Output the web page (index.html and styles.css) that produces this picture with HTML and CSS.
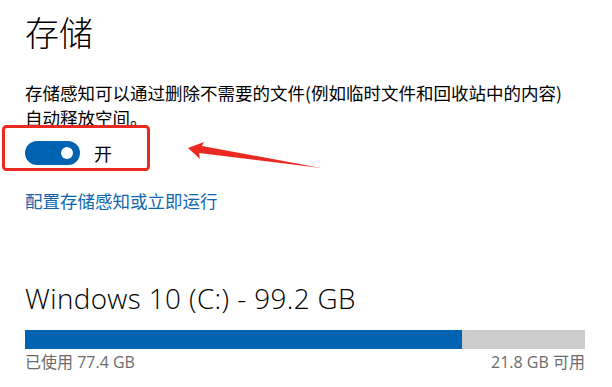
FILE: index.html
```html
<!DOCTYPE html>
<html lang="zh-CN">
<head>
  <meta charset="UTF-8" />
  <title>存储</title>
  <link rel="stylesheet" href="styles.css">
</head>
<body>

  <h1 class="title">存储</h1>

  <p class="desc">存储感知可以通过删除不需要的文件(例如临时文件和回收站中的内容)自动释放空间。</p>

  <div class="toggle-row">
    <div class="toggle"><span class="knob"></span></div>
    <span class="toggle-label">开</span>
  </div>

  <a class="link" href="#">配置存储感知或立即运行</a>

  <h2 class="drive">Windows 10 (C:) - 99.2 GB</h2>

  <div class="bar">
    <div class="bar-used" style="width: 78%"></div>
  </div>
  <div class="bar-labels">
    <span>已使用 77.4 GB</span>
    <span>21.8 GB 可用</span>
  </div>

  <!-- 标注：红框和箭头 -->
  <svg class="note" width="612" height="387" viewBox="0 0 612 387">
    <rect x="3.5" y="126.5" width="145" height="43" rx="3" fill="none" stroke="#ea2a20" stroke-width="3" />
    <polygon points="188,148 204,142 202,146 321,168 199,153 200,159" fill="#ea2a20" />
  </svg>

</body>
</html>
```

FILE: styles.css
```css
body {
  margin: 0;
  padding: 0 27px 0 25px;
  font-family: "Noto Sans CJK SC", "Noto Sans", sans-serif;
  color: #000;
  background: #fff;
  position: relative;
}

.title {
  margin: 10px 0 0;
  font-size: 34px;
  line-height: 44px;
  font-weight: 300;
}

.desc {
  margin: 26px 0 0;
  max-width: 545px;
  font-size: 17.5px;
  line-height: 25px;
}

.toggle-row {
  display: flex;
  align-items: center;
  gap: 14px;
  margin-top: 11px;
  height: 24px;
}

.toggle {
  width: 55px;
  height: 24px;
  border-radius: 12px;
  background: #0063b1;
  display: flex;
  align-items: center;
  justify-content: flex-end;
  padding-right: 7px;
  box-sizing: border-box;
}

.knob {
  width: 12px;
  height: 12px;
  border-radius: 50%;
  background: #fff;
}

.toggle-label {
  font-size: 18px;
}

.link {
  display: block;
  margin-top: 23px;
  font-size: 17.5px;
  line-height: 25px;
  color: #0f66b0;
  text-decoration: none;
}

.drive {
  margin: 67px 0 0;
  font-family: "Open Sans", "Noto Sans CJK SC", sans-serif;
  font-size: 27.8px;
  line-height: 36px;
  font-weight: 300;
  letter-spacing: 0.4px;
}

.bar {
  margin-top: 14px;
  height: 19px;
  background: #cccccc;
}

.bar-used {
  height: 100%;
  background: #0063b1;
}

.bar-labels {
  display: flex;
  justify-content: space-between;
  margin-top: 3px;
  font-family: "Open Sans", "Noto Sans CJK SC", sans-serif;
  font-size: 16px;
  line-height: 20px;
  color: #6b6b6b;
}

.note {
  position: absolute;
  top: 0;
  left: 0;
  pointer-events: none;
}
```
